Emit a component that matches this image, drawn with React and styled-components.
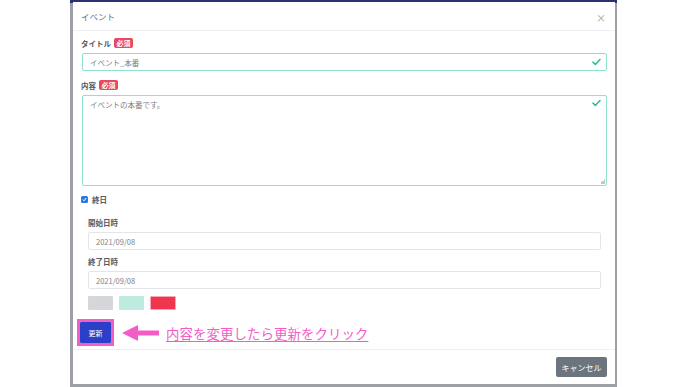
import React from "react";
import styled, { createGlobalStyle } from "styled-components";

const GlobalStyle = createGlobalStyle`
  html, body {
    margin: 0;
    padding: 0;
    background: #ffffff;
    font-family: "Noto Sans CJK JP", "Noto Sans", sans-serif;
  }
`;

const Page = styled.div`
  width: 688px;
  height: 387px;
  overflow: hidden;
  display: flex;
`;

const Backdrop = styled.div`
  margin-left: 70px;
  width: 547px;
  height: 387px;
  background: linear-gradient(#2a3270 0, #2a3270 3px, #9c9fa4 3px);
  display: flex;
  flex-direction: column;
`;

const Modal = styled.div`
  margin: 2px 2px 0 3px;
  height: 382px;
  background: #ffffff;
  display: flex;
  flex-direction: column;
`;

const Header = styled.div`
  height: 28px;
  border-bottom: 1px solid #eef0f2;
  display: flex;
  align-items: center;
  justify-content: space-between;
  padding: 0 9px 0 8px;
`;

const Title = styled.span`
  font-size: 8.5px;
  color: #6b7075;
`;

const Close = styled.span`
  font-size: 10px;
  color: #9a9ea3;
  line-height: 1;
  margin-top: 3px;
`;

const Body = styled.div`
  padding: 0 8px 0 8px;
  display: flex;
  flex-direction: column;
`;

const LabelRow = styled.div`
  height: 10px;
  margin-top: ${(p) => p.$mt}px;
  padding-left: ${(p) => (p.$inset ? 7 : 0)}px;
  display: flex;
  align-items: center;
  gap: 3px;
  font-size: 7.5px;
  font-weight: 700;
  color: #555a60;
`;

const Badge = styled.span`
  background: #e8485e;
  color: #ffffff;
  font-size: 7px;
  font-weight: 700;
  border-radius: 2px;
  padding: 0 2.5px;
  height: 10px;
  line-height: 10px;
`;

const Field = styled.div`
  margin-top: ${(p) => p.$mt}px;
  margin-left: ${(p) => (p.$inset ? 7 : 1)}px;
  margin-right: ${(p) => (p.$inset ? 6 : 0)}px;
  height: ${(p) => p.$h}px;
  box-sizing: border-box;
  border: 1px solid ${(p) => (p.$valid ? "#8fe0cc" : "#e3e6e9")};
  border-radius: 2px;
  display: flex;
  align-items: ${(p) => (p.$multi ? "flex-start" : "center")};
  justify-content: space-between;
  padding: ${(p) => (p.$multi ? "3px 5px 0 7px" : "0 5px 0 7px")};
  font-size: 7.5px;
  color: #7d8287;
  position: relative;
`;

const Grip = styled.span`
  position: absolute;
  right: 1px;
  bottom: 1px;
  width: 5px;
  height: 5px;
  background: linear-gradient(135deg, transparent 50%, #c2c5c9 50%);
`;

const CheckRow = styled.div`
  margin-top: 8px;
  height: 10px;
  display: flex;
  align-items: center;
  gap: 4px;
  font-size: 7.5px;
  color: #555a60;
  font-weight: 700;
`;

const Box = styled.span`
  width: 7px;
  height: 7px;
  background: #2a7be0;
  border-radius: 1.5px;
  display: flex;
  align-items: center;
  justify-content: center;
`;

const Swatches = styled.div`
  margin-top: 7px;
  margin-left: 7px;
  display: flex;
  gap: 6px;
`;

const Swatch = styled.span`
  width: ${(p) => p.$w}px;
  height: 14px;
  box-sizing: border-box;
  background: ${(p) => p.$c};
  border: ${(p) => (p.$ring ? "1px solid #f7a6b6" : "none")};
  border-radius: 1px;
`;

const ActionRow = styled.div`
  margin-top: 9px;
  margin-left: -4px;
  height: 27px;
  display: flex;
  align-items: center;
`;

const Highlight = styled.div`
  border: 3px solid #f35dc6;
  display: flex;
`;

const UpdateButton = styled.button`
  width: 31px;
  height: 21px;
  border: none;
  border-radius: 1px;
  background: #2c3fc8;
  color: #ffffff;
  font-family: inherit;
  font-size: 7px;
  padding: 0;
`;

const Note = styled.span`
  margin-left: 6px;
  font-size: 13.4px;
  color: #f35dc6;
  text-decoration: underline;
  text-underline-offset: 2px;
  letter-spacing: 0.1px;
`;

const Footer = styled.div`
  margin-top: 3px;
  border-top: 1px solid #eef0f2;
  flex: 1;
  display: flex;
  justify-content: flex-end;
  align-items: flex-start;
  padding: 7px 8px 0 0;
`;

const CancelButton = styled.button`
  width: 51px;
  height: 20px;
  border: none;
  border-radius: 2px;
  background: #6c757d;
  color: #ffffff;
  font-family: inherit;
  font-size: 8px;
  padding: 0;
`;

const ValidCheck = () => (
  <svg width="9" height="8" viewBox="0 0 9 8">
    <path d="M1 4.2 L3.4 6.5 L8 1.5" stroke="#2fbf95" strokeWidth="1.6" fill="none" strokeLinecap="round" strokeLinejoin="round" />
  </svg>
);

const Arrow = () => (
  <svg width="38" height="18" viewBox="0 0 38 18" style={{ marginLeft: 8 }}>
    <polygon points="0,9 16,1 16,17" fill="#f35dc6" />
    <rect x="15" y="6.5" width="22" height="5" fill="#f35dc6" />
  </svg>
);

export default function App() {
  return (
    <Page>
      <GlobalStyle />
      <Backdrop>
        <Modal>
          <Header>
            <Title>イベント</Title>
            <Close>×</Close>
          </Header>
          <Body>
            <LabelRow $mt={7}>
              タイトル<Badge>必須</Badge>
            </LabelRow>
            <Field $mt={5} $h={18} $valid>
              <span>イベント_本番</span>
              <ValidCheck />
            </Field>
            <LabelRow $mt={9}>
              内容<Badge>必須</Badge>
            </LabelRow>
            <Field $mt={5} $h={91} $valid $multi>
              <span>イベントの本番です。</span>
              <ValidCheck />
              <Grip />
            </Field>
            <CheckRow>
              <Box>
                <svg width="5" height="5" viewBox="0 0 5 5">
                  <path d="M0.8 2.6 L2 3.8 L4.2 1" stroke="#fff" strokeWidth="1" fill="none" />
                </svg>
              </Box>
              終日
            </CheckRow>
            <LabelRow $mt={13} $inset>
              開始日時
            </LabelRow>
            <Field $mt={5} $h={18} $inset>
              <span>2021/09/08</span>
            </Field>
            <LabelRow $mt={6} $inset>
              終了日時
            </LabelRow>
            <Field $mt={5} $h={18} $inset>
              <span>2021/09/08</span>
            </Field>
            <Swatches>
              <Swatch $w={25} $c="#d4d6d9" />
              <Swatch $w={25} $c="#bdebdf" />
              <Swatch $w={26} $c="#f0354f" $ring />
            </Swatches>
            <ActionRow>
              <Highlight>
                <UpdateButton>更新</UpdateButton>
              </Highlight>
              <Arrow />
              <Note>内容を変更したら更新をクリック</Note>
            </ActionRow>
          </Body>
          <Footer>
            <CancelButton>キャンセル</CancelButton>
          </Footer>
        </Modal>
      </Backdrop>
    </Page>
  );
}
